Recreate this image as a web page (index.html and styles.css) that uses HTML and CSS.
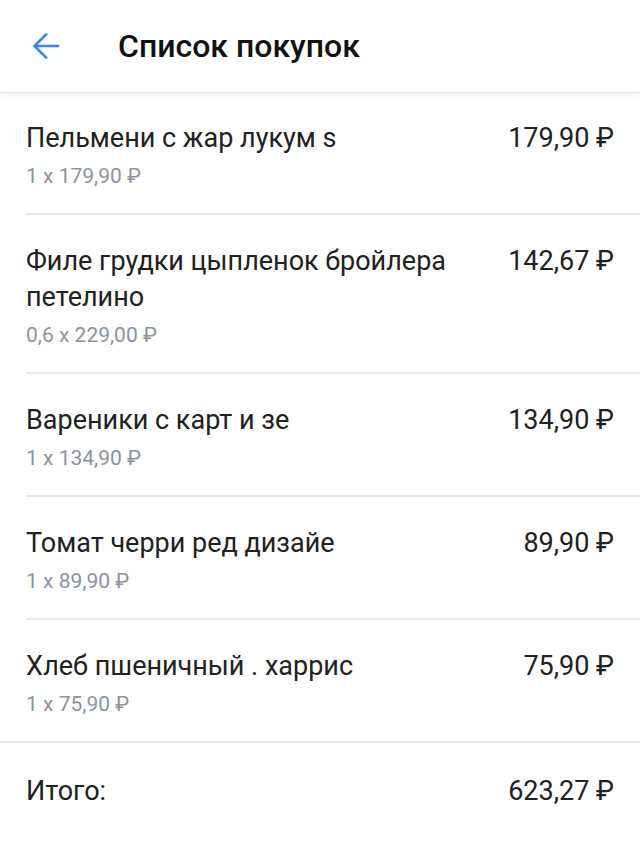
FILE: index.html
```html
<!DOCTYPE html>
<html lang="ru">
<head>
  <meta charset="UTF-8" />
  <meta name="viewport" content="width=device-width, initial-scale=1.0" />
  <title>Список покупок</title>
  <link rel="stylesheet" href="styles.css">
</head>
<body>
  <header class="top-bar">
    <button class="back-btn" aria-label="Назад">
      <svg width="28" height="28" viewBox="0 0 28 28">
        <path d="M26 14H3.5M14 2.5L2.5 14L14 25.5" fill="none" stroke="#3d85f2" stroke-width="2.6" stroke-linecap="square" stroke-linejoin="miter"/>
      </svg>
    </button>
    <h1 class="title">Список покупок</h1>
  </header>

  <div class="list">
    <div class="item">
      <div class="item-info">
        <div class="item-name">Пельмени с жар лукум s</div>
        <div class="item-qty">1 x 179,90 ₽</div>
      </div>
      <div class="item-price">179,90 ₽</div>
    </div>
    <div class="item">
      <div class="item-info">
        <div class="item-name">Филе грудки цыпленок бройлера петелино</div>
        <div class="item-qty">0,6 x 229,00 ₽</div>
      </div>
      <div class="item-price">142,67 ₽</div>
    </div>
    <div class="item">
      <div class="item-info">
        <div class="item-name">Вареники с карт и зе</div>
        <div class="item-qty">1 x 134,90 ₽</div>
      </div>
      <div class="item-price">134,90 ₽</div>
    </div>
    <div class="item">
      <div class="item-info">
        <div class="item-name">Томат черри ред дизайе</div>
        <div class="item-qty">1 x 89,90 ₽</div>
      </div>
      <div class="item-price">89,90 ₽</div>
    </div>
    <div class="item">
      <div class="item-info">
        <div class="item-name">Хлеб пшеничный . харрис</div>
        <div class="item-qty">1 x 75,90 ₽</div>
      </div>
      <div class="item-price">75,90 ₽</div>
    </div>
  </div>

  <div class="total">
    <span>Итого:</span>
    <span>623,27 ₽</span>
  </div>
</body>
</html>
```

FILE: styles.css
```css
body { margin: 0; background: #fff; color: #212121; font-family: Roboto, "Noto Sans", "Liberation Sans", sans-serif; }
.top-bar { height: 92px; display: flex; align-items: center; background: #fff; box-shadow: 0 1px 0 #e3e3e3, 0 3px 6px rgba(0, 0, 0, 0.06); position: relative; z-index: 1; }
.back-btn { background: none; border: none; padding: 0; margin-left: 32px; width: 28px; height: 28px; display: flex; cursor: pointer; }
.title { margin: 0 0 0 58px; font-size: 32px; font-weight: 500; color: #111; letter-spacing: 0; }
.list { border-bottom: 2px solid #e8e8e8; }
.item { display: flex; margin-left: 26px; padding: 28px 26px 23px 0; border-bottom: 2px solid #e8e8e8; }
.item:last-child { border-bottom: none; }
.item-info { flex: 1; min-width: 0; }
.item-name { font-size: 27px; line-height: 36px; }
.item-qty { margin-top: 6px; font-size: 21px; line-height: 28px; color: #8a939f; }
.item-price { margin-left: 24px; font-size: 27px; line-height: 36px; white-space: nowrap; }
.total { display: flex; justify-content: space-between; padding: 30px 26px; font-size: 27px; line-height: 36px; }
```
